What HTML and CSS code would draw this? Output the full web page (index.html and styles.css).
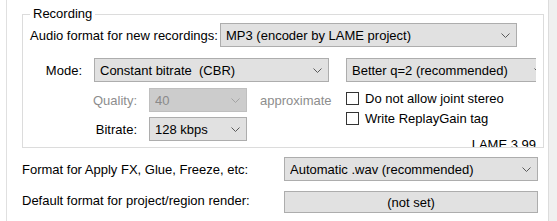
FILE: index.html
```html
<!DOCTYPE html>
<html lang="en">
<head>
    <meta charset="UTF-8">
    <title>Recording preferences</title>
    <link rel="stylesheet" href="styles.css">
</head>
<body>
    <div class="page">
        <div class="panel">
            <fieldset class="group">
                <legend>Recording</legend>
                <div class="row">
                    <span class="lbl fmt-lbl">Audio format for new recordings:</span>
                    <div class="combo fmt-combo">
                        <span class="value">MP3 (encoder by LAME project)</span>
                        <svg class="chev" width="9" height="5" viewBox="0 0 9 5"><polyline points="0.5,0.5 4.5,4.5 8.5,0.5"/></svg>
                    </div>
                </div>
                <div class="row mode-row">
                    <span class="lbl mode-lbl">Mode:</span>
                    <div class="combo mode-combo">
                        <span class="value">Constant bitrate&nbsp; (CBR)</span>
                        <svg class="chev" width="9" height="5" viewBox="0 0 9 5"><polyline points="0.5,0.5 4.5,4.5 8.5,0.5"/></svg>
                    </div>
                    <div class="clip">
                        <div class="combo q-combo">
                            <span class="value">Better q=2 (recommended)</span>
                            <svg class="chev" width="9" height="5" viewBox="0 0 9 5"><polyline points="0.5,0.5 4.5,4.5 8.5,0.5"/></svg>
                        </div>
                    </div>
                </div>
                <div class="detail">
                    <div class="enc-col">
                        <div class="row">
                            <span class="lbl enc-lbl disabled">Quality:</span>
                            <div class="combo small off">
                                <span class="value">40</span>
                                <svg class="chev" width="9" height="5" viewBox="0 0 9 5"><polyline points="0.5,0.5 4.5,4.5 8.5,0.5"/></svg>
                            </div>
                            <span class="hint disabled">approximate</span>
                        </div>
                        <div class="row bitrate-row">
                            <span class="lbl enc-lbl">Bitrate:</span>
                            <div class="combo small">
                                <span class="value">128 kbps</span>
                                <svg class="chev" width="9" height="5" viewBox="0 0 9 5"><polyline points="0.5,0.5 4.5,4.5 8.5,0.5"/></svg>
                            </div>
                        </div>
                    </div>
                    <div class="opt-col">
                        <label class="check"><span class="box"></span>Do not allow joint stereo</label>
                        <label class="check"><span class="box"></span>Write ReplayGain tag</label>
                        <div class="lame">LAME 3.99</div>
                    </div>
                </div>
            </fieldset>

            <div class="row out-row">
                <span class="lbl out-lbl">Format for Apply FX, Glue, Freeze, etc:</span>
                <div class="combo out-combo">
                    <span class="value">Automatic .wav (recommended)</span>
                    <svg class="chev" width="9" height="5" viewBox="0 0 9 5"><polyline points="0.5,0.5 4.5,4.5 8.5,0.5"/></svg>
                </div>
            </div>
            <div class="row out-row render-row">
                <span class="lbl out-lbl">Default format for project/region render:</span>
                <button class="btn">(not set)</button>
            </div>
        </div>
        <div class="scroll"></div>
    </div>
</body>
</html>
```

FILE: styles.css
```css
/* Page de base */
body {
    margin: 0;
    background: #fff;
    font-family: "Liberation Sans", Arial, sans-serif;
    font-size: 13px;
    color: #000;
}

.page {
    display: flex;
    height: 221px;
    overflow: hidden;
}

.panel {
    flex: 1;
    min-width: 0;
    margin-left: 6px;
    border-left: 1px solid #e0e0e0;
    padding: 6px 4px 0 15px;
}

.scroll {
    width: 8px;
    flex-shrink: 0;
    border-left: 1px solid #dcdcdc;
    background: #f0f0f0;
}

/* Cadre "Recording" */
.group {
    margin: 0;
    padding: 0 7px;
    border: 1px solid #dcdcdc;
    min-width: 0;
}

.group legend {
    padding: 0 3px;
    line-height: 16px;
}

/* Lignes */
.row {
    display: flex;
    align-items: center;
}

.group > .row:first-of-type {
    margin-top: 1px;
}

.lbl {
    flex-shrink: 0;
    white-space: nowrap;
}

.fmt-lbl { width: 190px; }

.mode-row { margin-top: 11px; }

.mode-lbl {
    width: 52px;
    margin-right: 12px;
    text-align: right;
}

.disabled { color: #8d8d8d; }

/* Listes déroulantes */
.combo {
    display: flex;
    align-items: center;
    flex-shrink: 0;
    box-sizing: border-box;
    height: 24px;
    padding: 0 6px 0 5px;
    background: #e1e1e1;
    border: 1px solid #adadad;
    white-space: nowrap;
}

.combo .value {
    flex: 1;
    overflow: hidden;
}

.chev {
    flex-shrink: 0;
    fill: none;
    stroke: #5a5a5a;
    stroke-width: 1;
}

.combo.off {
    background: #cccccc;
    border-color: #bfbfbf;
    color: #8a8a8a;
}

.combo.off .chev { stroke: #a3a3a3; }

.fmt-combo { width: 297px; }
.mode-combo { width: 235px; }

/* la liste de qualité dépasse du cadre et se fait couper */
.clip {
    flex: 1;
    min-width: 0;
    margin-left: 17px;
    overflow: hidden;
}

.q-combo { width: 204px; }

/* Qualité / débit + options */
.detail {
    display: flex;
    height: 59px;
    margin-top: 6px;
    overflow: hidden;
}

.enc-col {
    width: 316px;
    flex-shrink: 0;
}

.enc-lbl {
    width: 107px;
    margin-right: 12px;
    text-align: right;
}

.combo.small { width: 98px; }

.hint { margin-left: 13px; }

.bitrate-row { margin-top: 5px; }

.opt-col {
    flex: 1;
    min-width: 0;
}

.check {
    display: flex;
    align-items: center;
    height: 20px;
    white-space: nowrap;
}

.check .box {
    width: 13px;
    height: 13px;
    box-sizing: border-box;
    margin-right: 6px;
    border: 1px solid #333;
    background: #fff;
}

.lame {
    margin-top: 9px;
    line-height: 16px;
    text-align: right;
}

/* Formats de sortie */
.out-row { margin-top: 9px; }
.render-row { margin-top: 10px; }

.render-row .out-lbl { margin-bottom: 3px; }

.out-lbl { width: 262px; }

.out-combo { width: 254px; }

.btn {
    width: 254px;
    height: 22px;
    padding: 0;
    font: inherit;
    color: #000;
    background: #e1e1e1;
    border: 1px solid #adadad;
}
```
